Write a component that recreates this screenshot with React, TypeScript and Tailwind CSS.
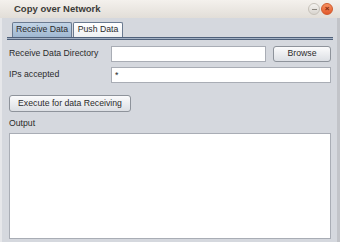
import React from "react";

function TitleButtons() {
  return (
    <div className="flex items-center gap-[1px]">
      <div className="w-[12px] h-[12px] rounded-full bg-gradient-to-b from-[#f6f4f1] to-[#d8d4ce] border border-[#c6c1b9] flex items-center justify-center">
        <div className="w-[5px] h-[1px] bg-[#8a857e]" />
      </div>
      <div className="w-[12px] h-[12px] rounded-full bg-gradient-to-b from-[#f7905f] to-[#e2582a] border border-[#cf5a2c] flex items-center justify-center text-[8px] leading-none text-[#7d2a0e] font-bold">
        ×
      </div>
    </div>
  );
}

export default function App() {
  return (
    <div className="w-[340px] h-[242px] bg-[#d5d8de] flex flex-col text-[#2b2b2b] font-['Liberation_Sans',Arial,sans-serif] text-[8.7px] overflow-hidden whitespace-nowrap">
      <div className="h-[18px] shrink-0 bg-gradient-to-b from-[#f4f1ed] to-[#e2ded8] flex items-center justify-between pl-[14px] pr-[7px]">
        <span className="font-bold text-[9.5px] text-[#3c3b37]">Copy over Network</span>
        <TitleButtons />
      </div>

      <div className="flex-1 flex flex-col border-l-2 border-l-[#e6e7ea] border-r-[3px] border-r-[#c2c4c9] pl-[5px] pr-[4px]">
        <div className="flex items-end pl-[5px] pt-[4px] gap-[1px]">
          <div className="w-[60px] h-[15px] flex items-center justify-center border border-[#6a7a90] border-b-0 rounded-t-[2px] bg-gradient-to-b from-[#c2d4e6] to-[#9fb7d1]">
            Receive Data
          </div>
          <div className="w-[50px] h-[15px] flex items-center justify-center border border-[#6a7a90] border-b-0 rounded-t-[2px] bg-gradient-to-b from-[#ffffff] to-[#eef0f3]">
            Push Data
          </div>
        </div>
        <div className="h-[3px] border-y border-y-[#4f607a] bg-[#a3b1c4]" />

        <div className="flex flex-col pl-[2px] pr-[2px] pt-[6px]">
          <div className="flex items-center h-[16px]">
            <span className="w-[102px]">Receive Data Directory</span>
            <div className="w-[155px] h-[16px] bg-white border border-[#a9adb5]" />
            <button className="ml-[7px] w-[58px] h-[16px] rounded-[3px] border border-[#8e939b] bg-gradient-to-b from-[#fbfbfc] to-[#dcdfe4] text-[#2b2b2b]">
              Browse
            </button>
          </div>
          <div className="flex items-center h-[16px] mt-[5px]">
            <span className="w-[102px]">IPs accepted</span>
            <div className="flex-1 h-[16px] bg-white border border-[#a9adb5] flex items-center pl-[3px] leading-none">*</div>
          </div>

          <div className="mt-[12px]">
            <button className="w-[122px] h-[17px] rounded-[3px] border border-[#8e939b] bg-gradient-to-b from-[#fbfbfc] to-[#dcdfe4] text-[#2b2b2b]">
              Execute for data Receiving
            </button>
          </div>

          <div className="mt-[6px] h-[12px] flex items-center">Output</div>
          <div className="mt-[3px] h-[106px] bg-white border border-[#a9adb5]" />
        </div>
      </div>
    </div>
  );
}
